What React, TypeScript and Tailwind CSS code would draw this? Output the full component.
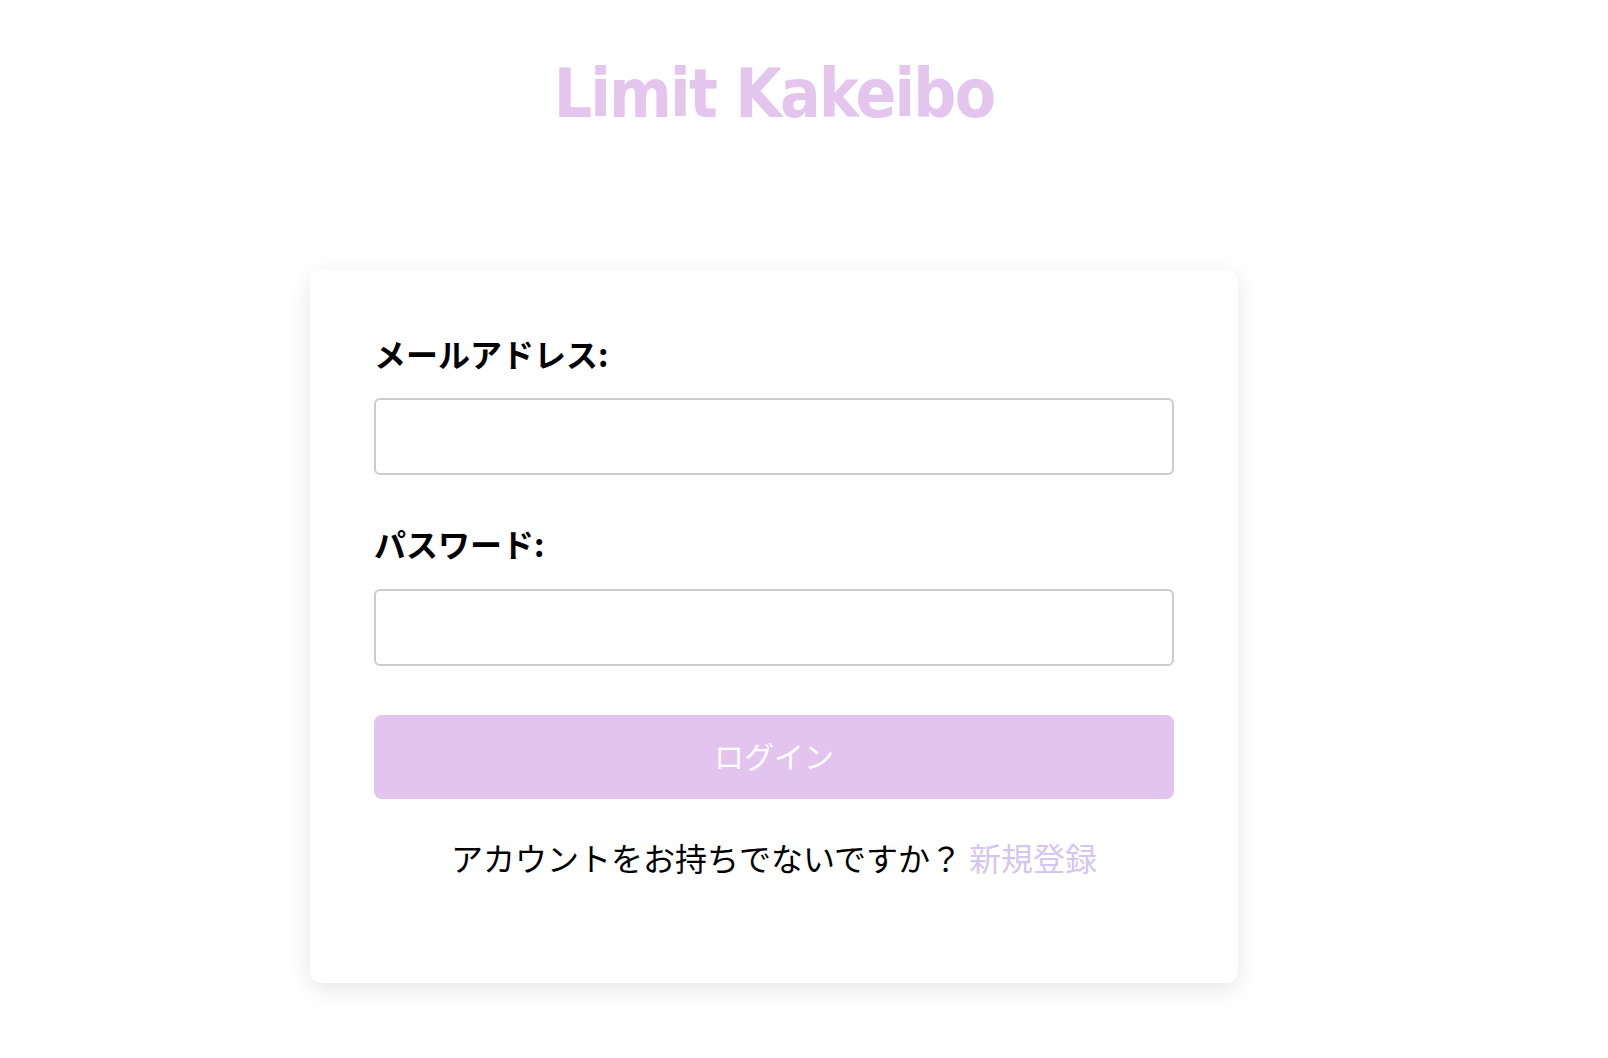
import React from "react";

export default function App() {
  return (
    <div className="min-h-[1058px] w-full bg-white">
      <div className="flex w-[1548px] flex-col items-center">
        <h1
          className="pt-[54px] text-[67px] leading-[80px] font-bold font-stretch-semi-condensed tracking-[-1.8px] text-[#e3c5ee]"
          style={{ fontFamily: '"DejaVu Sans", Verdana, sans-serif' }}
        >
          Limit Kakeibo
        </h1>
        <div
          className="mt-[136px] w-[928px] rounded-[12px] bg-white px-[64px] pt-[67px] pb-[110px] shadow-[0_6px_24px_rgba(0,0,0,0.1)]"
          style={{ fontFamily: '"Noto Sans CJK JP", "Noto Sans", sans-serif' }}
        >
          <label className="mb-[29px] block text-[32px] leading-[32px] font-bold text-black">
            メールアドレス:
          </label>
          <input
            type="email"
            className="mb-[52px] block h-[77px] w-full rounded-[6px] border-2 border-[#cccccc] bg-white px-4 text-[24px] outline-none"
          />
          <label className="mb-[30px] block text-[32px] leading-[32px] font-bold text-black">
            パスワード:
          </label>
          <input
            type="password"
            className="mb-[49px] block h-[77px] w-full rounded-[6px] border-2 border-[#cccccc] bg-white px-4 text-[24px] outline-none"
          />
          <button className="flex h-[84px] w-full items-center justify-center rounded-[8px] bg-[#e2c4ee] pb-[4px] text-[30px] text-white">
            ログイン
          </button>
          <p className="mt-[42px] text-center text-[32px] leading-[32px] text-black">
            アカウントをお持ちでないですか？{" "}
            <a href="#" className="text-[#d5c6ef]">
              新規登録
            </a>
          </p>
        </div>
      </div>
    </div>
  );
}
